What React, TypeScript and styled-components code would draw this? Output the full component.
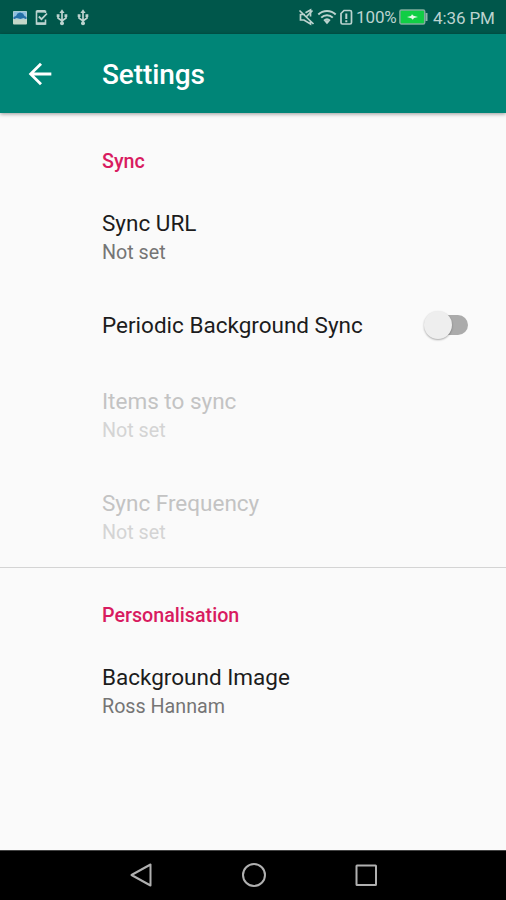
import React from "react";
import styled, { createGlobalStyle } from "styled-components";

const GlobalStyle = createGlobalStyle`
  * { box-sizing: border-box; }
  body { margin: 0; background: #fafafa; font-family: Roboto, sans-serif; }
`;

const Screen = styled.div`
  display: flex;
  flex-direction: column;
  width: 506px;
  height: 900px;
  background: #fafafa;
  overflow: hidden;
`;

const StatusBar = styled.div`
  display: flex;
  flex: none;
  align-items: center;
  justify-content: space-between;
  height: 34px;
  background: #00574b;
  color: #bcd3cf;
`;

const StatusIcon = styled.svg`
  display: block;
  flex: none;
`;

const Notifications = styled.div`
  display: flex;
  align-items: center;
  padding: 1px 0 0 12px;
`;

const SystemStatus = styled.div`
  display: flex;
  align-items: center;
  padding-right: 11px;
`;

const StatusText = styled.span<{ $width: number; $drop?: number }>`
  width: ${(p) => p.$width}px;
  padding-top: ${(p) => p.$drop ?? 0}px;
  font-size: 17px;
  line-height: 24px;
  letter-spacing: -0.1px;
  white-space: nowrap;
`;

const AppBar = styled.header`
  display: flex;
  flex: none;
  align-items: center;
  height: 79px;
  padding-left: 23px;
  background: #008577;
  box-shadow: 0 1px 4px rgba(0, 0, 0, 0.4);
`;

const BackButton = styled.button`
  width: 34px;
  height: 34px;
  margin: 0 45px 0 0;
  padding: 0;
  border: 0;
  background: none;
`;

const Title = styled.h1`
  margin: 2px 0 0;
  color: #fff;
  font-size: 28px;
  font-weight: 500;
  line-height: 34px;
  letter-spacing: -0.1px;
`;

const Preferences = styled.main`
  flex: 1;
`;

const Category = styled.h2<{ $divided?: boolean }>`
  height: 73px;
  margin: ${(p) => (p.$divided ? "-1px" : "0")} 0 0;
  padding: 36px 0 0 102px;
  border-top: 1px solid ${(p) => (p.$divided ? "#d4d4d4" : "transparent")};
  color: #d81b60;
  font-size: 19.7px;
  font-weight: 500;
  line-height: 24px;
`;

const Preference = styled.div<{ $single?: boolean; $disabled?: boolean }>`
  display: flex;
  align-items: center;
  justify-content: space-between;
  height: ${(p) => (p.$single ? 76 : 102)}px;
  padding: 0 35px ${(p) => (p.$single ? 1 : 0)}px 102px;
  color: ${(p) => (p.$disabled ? "#c3c3c3" : "#1c1c1c")};
`;

const Labels = styled.div`
  padding-top: 1px;
`;

const Name = styled.div`
  font-size: 22.5px;
  line-height: 29px;
`;

const Summary = styled.div<{ $disabled?: boolean }>`
  color: ${(p) => (p.$disabled ? "#d4d4d4" : "#757575")};
  font-size: 19.7px;
  line-height: 29px;
`;

const Switch = styled.button`
  display: flex;
  align-items: center;
  width: 48px;
  height: 34px;
  margin-bottom: 1px;
  padding: 0 3px 0 1px;
  border: 0;
  background: none;
`;

const Thumb = styled.span`
  z-index: 1;
  flex: none;
  width: 28px;
  height: 28px;
  border-radius: 50%;
  background: #eeeeee;
  box-shadow: 0 1px 2px rgba(0, 0, 0, 0.32);
`;

const Track = styled.span`
  width: 34px;
  height: 20px;
  margin-left: -18px;
  border-radius: 10px;
  background: #ababab;
`;

const NavBar = styled.nav`
  display: grid;
  flex: none;
  grid-template-columns: repeat(3, 112.5px);
  justify-content: center;
  justify-items: center;
  align-items: center;
  height: 50px;
  padding: 0 0 1px 1px;
  border-top: 1px solid #444;
  background: #000;
`;

const Icon = styled.svg`
  display: block;
`;

function Row({ name, summary, disabled }: { name: string; summary: string; disabled?: boolean }) {
  return (
    <Preference $disabled={disabled}>
      <Labels>
        <Name>{name}</Name>
        <Summary $disabled={disabled}>{summary}</Summary>
      </Labels>
    </Preference>
  );
}

function Usb() {
  return (
    <StatusIcon width="21" height="20" viewBox="0 0 21 20" fill="none" stroke="currentColor" strokeWidth="1.7">
      <path d="M8 16V4M4 7.500v2.500l4 3 4-3V7.500" />
      <path d="M8 1.300l2.600 3.700H5.400z" fill="currentColor" stroke="none" />
      <circle cx="8" cy="15.200" r="2" fill="currentColor" stroke="none" />
      <path d="M2.700 6.300h2.800v2.800H2.700zM10.500 6.300h2.800v2.800h-2.800z" fill="currentColor" stroke="none" />
    </StatusIcon>
  );
}

export default function App() {
  return (
    <Screen>
      <GlobalStyle />
      <StatusBar>
        <Notifications>
          <StatusIcon width="21" height="20" viewBox="0 0 21 20">
            <rect x="1" y="3" width="14" height="13.500" rx="1" fill="#c3d8c8" />
            <path d="M1.500 3.500h13v7h-13z" fill="#8dbfe0" />
            <path d="M1.500 11V9l2.500-1 1.500-2.500 2.500-1 3 1 1.500 2.500 2 1v2z" fill="#2470a8" />
            <path d="M1.500 11.500l3-1.500 4 1 3-1 3 1.500z" fill="#a8cbd8" />
          </StatusIcon>
          <StatusIcon width="21" height="20" viewBox="0 0 21 20" fill="none" stroke="currentColor" strokeWidth="1.600">
            <path d="M12.500 5V3.500h-9V16h9v-4.500" />
            <path d="M3.500 3.200h9M3.500 15.500h9" strokeWidth="2.400" />
            <path d="M5.800 8.500l2.700 2.700L14 5.500" strokeWidth="1.800" />
          </StatusIcon>
          <Usb />
          <Usb />
        </Notifications>
        <SystemStatus>
          <StatusIcon width="19" height="20" viewBox="0 0 19 20" fill="none" stroke="currentColor" strokeWidth="1.700">
            <path d="M1.500 3.500L15.500 17M7 7.500H2.500v5.500h3.500l6.500 4v-3M7.500 5.800L12.500 3v6.500" />
            <path d="M8 10l6.500-6.500" />
          </StatusIcon>
          <StatusIcon width="22" height="20" viewBox="0 0 22 20" fill="none" stroke="currentColor" strokeWidth="2">
            <path d="M1.300 7.500a12.500 12.500 0 0 1 17.400 0M4.200 10.600a8.400 8.400 0 0 1 11.600 0M7 13.700a4.500 4.500 0 0 1 6 0" />
            <path d="M7.600 14.500L10 17.200l2.400-2.700a3.400 3.400 0 0 0-4.800 0z" fill="currentColor" stroke="none" />
          </StatusIcon>
          <StatusIcon width="17" height="20" viewBox="0 0 17 20" fill="none" stroke="currentColor" strokeWidth="1.700">
            <path d="M2 6.500L5 3.500h6q1.500 0 1.500 1.500v10.500q0 1.500-1.500 1.500H3.500Q2 17 2 15.500z" />
            <path d="M7.300 6.500V12M7.300 13.300v2" strokeWidth="2" />
          </StatusIcon>
          <StatusText $width={43}>100%</StatusText>
          <StatusIcon width="34" height="20" viewBox="0 0 34 20">
            <rect x=".9" y="3" width="24.800" height="14" rx="1.500" fill="#11ce45" stroke="#7fae9d" strokeWidth="1.500" />
            <path d="M26.500 6h2v8h-2z" fill="#8fb8ab" />
            <path d="M8 10l4-1 1-1.800 1.500 1.600 4.500 1.200-4 1-1.200 1.800-1.500-1.600z" fill="#e6fbe9" />
          </StatusIcon>
          <StatusText $width={62} $drop={2}>4:36 PM</StatusText>
        </SystemStatus>
      </StatusBar>
      <AppBar>
        <BackButton aria-label="Back">
          <Icon width="34" height="34" viewBox="0 0 24 24" fill="#fff">
            <path d="M20 11H7.830l5.590-5.590L12 4l-8 8 8 8 1.410-1.410L7.830 13H20v-2z" />
          </Icon>
        </BackButton>
        <Title>Settings</Title>
      </AppBar>
      <Preferences>
        <Category>Sync</Category>
        <Row name="Sync URL" summary="Not set" />
        <Preference $single>
          <Name>Periodic Background Sync</Name>
          <Switch role="switch" aria-checked="false" aria-label="Periodic Background Sync">
            <Thumb />
            <Track />
          </Switch>
        </Preference>
        <Row name="Items to sync" summary="Not set" disabled />
        <Row name="Sync Frequency" summary="Not set" disabled />
        <Category $divided>Personalisation</Category>
        <Row name="Background Image" summary="Ross Hannam" />
      </Preferences>
      <NavBar>
        <Icon width="26" height="26" viewBox="0 0 26 26" fill="none" stroke="#b0b0b0" strokeWidth="2" strokeLinejoin="round">
          <path d="M22.500 2.500v21L3.500 13z" />
        </Icon>
        <Icon width="26" height="26" viewBox="0 0 26 26" fill="none" stroke="#b0b0b0" strokeWidth="2">
          <circle cx="13" cy="13" r="11" />
        </Icon>
        <Icon width="26" height="26" viewBox="0 0 26 26" fill="none" stroke="#b0b0b0" strokeWidth="2">
          <rect x="3.500" y="3.500" width="19.500" height="19.500" rx=".5" />
        </Icon>
      </NavBar>
    </Screen>
  );
}
